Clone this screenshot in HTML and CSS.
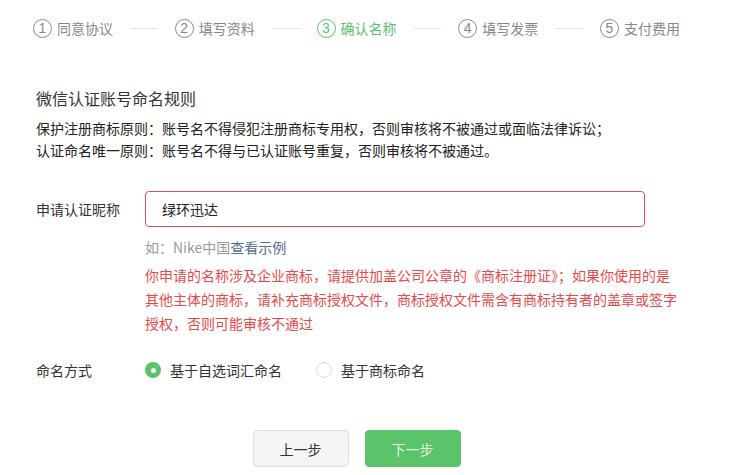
FILE: index.html
```html
<!DOCTYPE html>
<html lang="zh-CN">
<head>
    <meta charset="UTF-8">
    <meta name="viewport" content="width=device-width, initial-scale=1.0">
    <title>确认名称</title>
    <link rel="stylesheet" href="styles.css">
</head>
<body>
    <div class="page">
        <ul class="steps">
            <li class="step"><span class="num">1</span>同意协议</li>
            <li class="sep"></li>
            <li class="step"><span class="num">2</span>填写资料</li>
            <li class="sep"></li>
            <li class="step active"><span class="num">3</span>确认名称</li>
            <li class="sep"></li>
            <li class="step"><span class="num">4</span>填写发票</li>
            <li class="sep"></li>
            <li class="step"><span class="num">5</span>支付费用</li>
        </ul>

        <section class="rules">
            <h2>微信认证账号命名规则</h2>
            <p>保护注册商标原则：账号名不得侵犯注册商标专用权，否则审核将不被通过或面临法律诉讼；</p>
            <p>认证命名唯一原则：账号名不得与已认证账号重复，否则审核将不被通过。</p>
        </section>

        <div class="form-row name-row">
            <label class="label">申请认证昵称</label>
            <div class="field">
                <div class="input">绿环迅达</div>
                <p class="hint">如：Nike中国<a href="#">查看示例</a></p>
                <p class="warn">你申请的名称涉及企业商标，请提供加盖公司公章的《商标注册证》；如果你使用的是其他主体的商标，请补充商标授权文件，商标授权文件需含有商标持有者的盖章或签字授权，否则可能审核不通过</p>
            </div>
        </div>

        <div class="form-row radio-row">
            <label class="label">命名方式</label>
            <div class="field radios">
                <span class="radio checked"><i></i>基于自选词汇命名</span>
                <span class="radio"><i></i>基于商标命名</span>
            </div>
        </div>

        <div class="actions">
            <button class="btn">上一步</button>
            <button class="btn primary">下一步</button>
        </div>
    </div>
</body>
</html>
```

FILE: styles.css
```css
body {
    margin: 0;
    padding: 0;
    background: #fff;
    color: #333;
    font: normal 14px "Noto Sans CJK SC", "Noto Sans", sans-serif;
}

.page {
    width: 647px;
    margin-left: 33px;
}

/* steps */
.steps {
    list-style: none;
    margin: 0;
    padding: 18px 0 0;
    display: flex;
    align-items: center;
    gap: 17px;
    height: 20px;
}

.step {
    display: flex;
    align-items: center;
    gap: 5px;
    color: #888;
    font-size: 14px;
    line-height: 20px;
    white-space: nowrap;
}

.step .num {
    width: 17px;
    height: 17px;
    border: 1px solid #8a8a8a;
    border-radius: 50%;
    display: flex;
    align-items: center;
    justify-content: center;
    font-family: "Liberation Sans", sans-serif;
    font-size: 14px;
    line-height: 1;
}

.step.active {
    color: #5ac46b;
}

.step.active .num {
    border-color: #5ac46b;
}

.sep {
    width: 30px;
    height: 1px;
    background: #e3e3e3;
}

/* rules */
.rules {
    padding-left: 3px;
    margin-top: 48px;
}

.rules h2 {
    margin: 0 0 7px;
    font-size: 16px;
    font-weight: normal;
    line-height: 24px;
    color: #333;
}

.rules p {
    margin: 0;
    font-size: 14px;
    line-height: 22px;
    color: #222;
}

/* form */
.form-row {
    display: flex;
    padding-left: 3px;
}

.label {
    width: 109px;
    flex: none;
    color: #333;
}

.field {
    width: 535px;
}

.name-row {
    margin-top: 30px;
}

.name-row .label {
    line-height: 36px;
}

.input {
    width: 500px;
    height: 36px;
    box-sizing: border-box;
    border: 1px solid #e35252;
    border-radius: 4px;
    padding: 0 16px;
    line-height: 34px;
    color: #222;
}

.hint {
    margin: 10px 0 0;
    line-height: 20px;
    color: #9a9a9a;
}

.hint a {
    color: #576b95;
    text-decoration: none;
}

.warn {
    margin: 6px 0 0;
    line-height: 24px;
    color: #e84a4a;
}

.radio-row {
    margin-top: 25px;
    line-height: 20px;
}

.radios {
    display: flex;
    gap: 34px;
}

.radio {
    display: flex;
    align-items: center;
    gap: 9px;
    color: #333;
}

.radio i {
    width: 14px;
    height: 14px;
    border: 1px solid #dcdcdc;
    border-radius: 50%;
    display: flex;
    align-items: center;
    justify-content: center;
}

.radio.checked i {
    width: 16px;
    height: 16px;
    border: none;
    background: #5ac46b;
}

.radio.checked i::after {
    content: "";
    width: 5px;
    height: 5px;
    border-radius: 50%;
    background: #fff;
}

/* buttons */
.actions {
    margin-top: 50px;
    display: flex;
    justify-content: center;
    gap: 16px;
}

.btn {
    width: 96px;
    height: 37px;
    border: 1px solid #dedede;
    border-radius: 4px;
    background: #f4f5f7;
    color: #333;
    font: normal 14px "Noto Sans CJK SC", "Noto Sans", sans-serif;
}

.btn.primary {
    background: #5ac46b;
    border-color: #5ac46b;
    color: rgba(255, 255, 255, 0.85);
}
```
